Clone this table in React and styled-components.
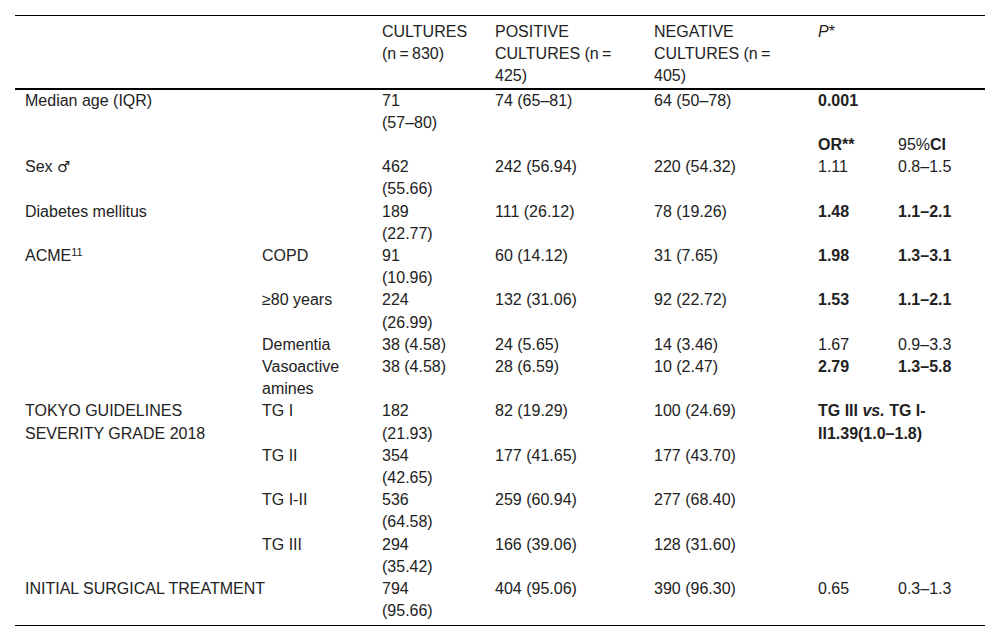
import styled, { createGlobalStyle } from "styled-components";

const GlobalStyle = createGlobalStyle`
  body {
    margin: 0;
    background: #ffffff;
    font-family: "Liberation Sans", Arial, sans-serif;
    color: #222222;
  }
`;

const T = "\u2009";

const widths = [237, 120, 113, 159, 164, 80, 97];

const ageRows = [
  { label: "COPD", values: ["91 (10.96)", "60 (14.12)", "31 (7.65)"], or: "1.98", ci: "1.3–3.1", bold: true },
  { label: "≥80 years", values: ["224 (26.99)", "132 (31.06)", "92 (22.72)"], or: "1.53", ci: "1.1–2.1", bold: true },
  { label: "Dementia", values: ["38 (4.58)", "24 (5.65)", "14 (3.46)"], or: "1.67", ci: "0.9–3.3", bold: false },
  { label: "Vasoactive amines", values: ["38 (4.58)", "28 (6.59)", "10 (2.47)"], or: "2.79", ci: "1.3–5.8", bold: true },
];

const tokyoRows = [
  { label: "TG I", values: ["182 (21.93)", "82 (19.29)", "100 (24.69)"] },
  { label: "TG II", values: ["354 (42.65)", "177 (41.65)", "177 (43.70)"] },
  { label: "TG I-II", values: ["536 (64.58)", "259 (60.94)", "277 (68.40)"] },
  { label: "TG III", values: ["294 (35.42)", "166 (39.06)", "128 (31.60)"] },
];

// each word stays whole, so "(57–80)" never breaks at its dash
const Value = ({ text }) =>
  text.split(" ").map((word, i) => (
    <span key={i}>
      {i > 0 && " "}
      <Word>{word}</Word>
    </span>
  ));

const Counts = ({ values }) => (
  <>
    <Td $narrow>
      <Value text={values[0]} />
    </Td>
    <Td>
      <Value text={values[1]} />
    </Td>
    <Td>
      <Value text={values[2]} />
    </Td>
  </>
);

const App = () => {
  return (
    <Page>
      <GlobalStyle />
      <Table>
        <colgroup>
          {widths.map((w, i) => (
            <col key={i} style={{ width: w }} />
          ))}
        </colgroup>
        <thead>
          <tr>
            <Th colSpan={2}></Th>
            <Th $narrow>CULTURES ({`n${T}=${T}830`})</Th>
            <Th>POSITIVE CULTURES (n{T}={T}425)</Th>
            <Th>NEGATIVE CULTURES (n{T}={T}405)</Th>
            <Th colSpan={2}>
              <i>P</i>*
            </Th>
          </tr>
        </thead>
        <tbody>
          <tr>
            <Td colSpan={2}>Median age (IQR)</Td>
            <Counts values={["71 (57–80)", "74 (65–81)", "64 (50–78)"]} />
            <Td $bold colSpan={2}>0.001</Td>
          </tr>
          <tr>
            <Td colSpan={5}></Td>
            <Td $bold>OR**</Td>
            <Td>
              95%<b>CI</b>
            </Td>
          </tr>
          <tr>
            <Td colSpan={2}>
              Sex <Symbol>♂</Symbol>
            </Td>
            <Counts values={["462 (55.66)", "242 (56.94)", "220 (54.32)"]} />
            <Td>1.11</Td>
            <Td>0.8–1.5</Td>
          </tr>
          <tr>
            <Td colSpan={2}>Diabetes mellitus</Td>
            <Counts values={["189 (22.77)", "111 (26.12)", "78 (19.26)"]} />
            <Td $bold>1.48</Td>
            <Td $bold>1.1–2.1</Td>
          </tr>
          {ageRows.map((row, i) => (
            <tr key={row.label}>
              {i === 0 && (
                <Td rowSpan={ageRows.length}>
                  ACME<sup>11</sup>
                </Td>
              )}
              <Td>{row.label}</Td>
              <Counts values={row.values} />
              <Td $bold={row.bold}>{row.or}</Td>
              <Td $bold={row.bold}>{row.ci}</Td>
            </tr>
          ))}
          {tokyoRows.map((row, i) => (
            <tr key={row.label}>
              {i === 0 && <Td rowSpan={tokyoRows.length}>TOKYO GUIDELINES SEVERITY GRADE 2018</Td>}
              <Td>{row.label}</Td>
              <Counts values={row.values} />
              {i === 0 && (
                <Td $bold colSpan={2} rowSpan={tokyoRows.length}>
                  TG III <i>vs.</i> TG I-II1.39(1.0–1.8)
                </Td>
              )}
            </tr>
          ))}
          <LastRow>
            <Td colSpan={2}>INITIAL SURGICAL TREATMENT</Td>
            <Counts values={["794 (95.66)", "404 (95.06)", "390 (96.30)"]} />
            <Td>0.65</Td>
            <Td>0.3–1.3</Td>
          </LastRow>
        </tbody>
      </Table>
    </Page>
  );
};

export default App;

const Page = styled.div`
  padding: 15px;
`;

const Table = styled.table`
  width: 970px;
  border-collapse: collapse;
  table-layout: fixed;
  font-size: 16px;
  line-height: 22.2px;
  border-top: 1px solid #000;
  border-bottom: 1px solid #000;

  sup {
    font-size: 11px;
    line-height: 0;
    vertical-align: 5px;
  }
`;

const Word = styled.span`
  white-space: nowrap;
`;

const Symbol = styled.span`
  font-family: "DejaVu Sans", sans-serif;
  font-size: 15px;
`;

const Th = styled.th`
  text-align: left;
  vertical-align: top;
  font-weight: 400;
  padding: 5px ${(p) => (p.$narrow ? "33px" : "10px")} 0 10px;
  border-bottom: 2px solid #000;
`;

const Td = styled.td`
  text-align: left;
  vertical-align: top;
  padding: 0 ${(p) => (p.$narrow ? "33px" : "10px")} 0 10px;
  font-weight: ${(p) => (p.$bold ? 700 : 400)};
`;

const LastRow = styled.tr`
  td {
    padding-bottom: 3px;
  }
`;
